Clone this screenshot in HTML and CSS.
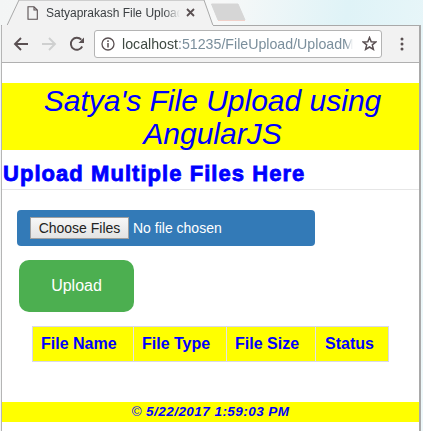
FILE: index.html
```html
<!DOCTYPE html>
<html lang="en">
<head>
<meta charset="utf-8">
<title>Satyaprakash File Upload</title>
<link rel="stylesheet" href="styles.css">
</head>
<body>
<div class="desktop">
  <div class="tabstrip">
    <svg class="tabshape" width="423" height="26" viewBox="0 0 423 26">
      <path d="M1 25.500H7L19 0H204L213 25.500H420" fill="#f2f2f2" stroke="#a9a9a9" stroke-width="1"/>
      <path d="M2 25H213V27H2Z" fill="#f2f2f2"/>
      <path d="M211.500 4H238L245 20H218Z" fill="#d6d6d6" stroke="#d6d6d6" stroke-linejoin="round"/>
      <path d="M218 20.500H245" stroke="#f0cfc8" stroke-width="1"/>
    </svg>
    <svg class="page-icon" width="11" height="14" viewBox="0 0 11 14">
      <path d="M1 .7H7L10.300 4V13.300H1ZM7 .7V4H10.300" fill="none" stroke="#5a5052" stroke-width="1.100"/>
    </svg>
    <span class="tabtitle">Satyaprakash File Upload</span>
    <svg class="close" width="9" height="9" viewBox="0 0 9 9">
      <path d="M1 1L8 8M8 1L1 8" stroke="#5a5052" stroke-width="1.800"/>
    </svg>
  </div>
  <div class="window">
    <div class="toolbar">
      <svg class="nav" width="16" height="16" viewBox="0 0 16 16">
        <path d="M15 8H2M8 2L2 8L8 14" fill="none" stroke="#5a5052" stroke-width="1.900"/>
      </svg>
      <svg class="nav" width="16" height="16" viewBox="0 0 16 16">
        <path d="M1 8H14M8 2L14 8L8 14" fill="none" stroke="#cfd0d0" stroke-width="1.900"/>
      </svg>
      <svg class="nav nav-last" width="16" height="16" viewBox="0 0 16 16">
        <path d="M13.200 10.500A6 6 0 1 1 12.300 3.700" fill="none" stroke="#5a5052" stroke-width="1.900"/>
        <path d="M9.500 7H15V1.500Z" fill="#5a5052"/>
      </svg>
      <div class="omnibox">
        <svg class="info" width="14" height="14" viewBox="0 0 14 14">
          <circle cx="7" cy="7" r="6" fill="none" stroke="#5a5052" stroke-width="1.300"/>
          <path d="M7 6V10.500M7 3.300V5" stroke="#5a5052" stroke-width="1.500"/>
        </svg>
        <div class="url"><span class="host">localhost</span>:51235/FileUpload/UploadMultipleFiles</div>
        <svg class="star" width="15" height="15" viewBox="0 0 15 15">
          <path d="M7.500 1.500L9.200 5.700L13.800 6L10.300 8.900L11.400 13.400L7.500 11L3.600 13.400L4.700 8.900L1.200 6L5.800 5.700Z" fill="none" stroke="#5a5052" stroke-width="1.500"/>
        </svg>
      </div>
      <svg class="menu" width="4" height="14" viewBox="0 0 4 14">
        <circle cx="2" cy="2" r="1.500" fill="#5a5052"/>
        <circle cx="2" cy="7" r="1.500" fill="#5a5052"/>
        <circle cx="2" cy="12" r="1.500" fill="#5a5052"/>
      </svg>
    </div>
    <main class="page">
      <h1 class="banner">Satya's File Upload using AngularJS</h1>
      <h3 class="subhead">Upload Multiple Files Here</h3>
      <div class="filebox">
        <span class="choose">Choose Files</span>
        <span class="nofile">No file chosen</span>
      </div>
      <div class="upload">Upload</div>
      <table class="files">
        <tr>
          <th class="c1">File Name</th>
          <th class="c2">File Type</th>
          <th class="c3">File Size</th>
          <th class="c4">Status</th>
        </tr>
      </table>
      <footer class="foot"><span class="copy">©</span> 5/22/2017 1:59:03 PM</footer>
    </main>
  </div>
</div>
</body>
</html>
```
FILE: styles.css
```css
* { box-sizing: border-box; }
html, body { margin: 0; padding: 0; }
body { width: 423px; height: 431px; overflow: hidden; font-family: "Liberation Sans", Arial, sans-serif; }
.desktop {
  width: 423px; height: 431px; overflow: hidden;
  background: linear-gradient(100deg, #f3f5f5 0%, #f7f8f8 45%, #dff3f7 70%, #eef8fa 100%);
}
.tabstrip { position: relative; height: 25px; display: flex; align-items: center; padding-left: 27px; }
.tabshape { position: absolute; left: 0; top: 0; }
.page-icon { position: relative; margin-right: 8px; flex: none; }
.tabtitle {
  position: relative; width: 134px; white-space: nowrap; overflow: hidden;
  font-size: 12px; color: #3c4043; flex: none; margin-right: 6px;
  -webkit-mask-image: linear-gradient(90deg, #000 88%, transparent);
}
.close { position: relative; flex: none; }
.window { width: 420px; height: 406px; margin-left: 1px; background: #fff; border-right: 2px solid #a9a9a9; border-left: 1px solid #b5b5b5; }
.toolbar { height: 38px; background: #f2f2f2; border-bottom: 1px solid #b0b0b0; display: flex; align-items: center; padding-left: 11px; }
.nav { margin-right: 12px; flex: none; }
.nav-last { margin-right: 9px; }
.omnibox {
  width: 288px; height: 28px; background: #fff; border: 1px solid #b4b4b4; border-radius: 3px;
  display: flex; align-items: center; padding-left: 6px;
}
.info { flex: none; margin-right: 7px; }
.url {
  width: 231px; overflow: hidden; white-space: nowrap; font-size: 14.200px; color: #7b8f9c; flex: none;
  -webkit-mask-image: linear-gradient(90deg, #000 97%, transparent);
}
.host { color: #3f4a42; }
.star { flex: none; margin-left: 9px; }
.menu { margin-left: 18px; flex: none; }
.page { padding-top: 20px; }
.banner {
  margin: 0; height: 67px; background: #ff0; color: #00f; text-align: center;
  font-size: 30px; line-height: 33px; font-style: italic; font-weight: 400;
  padding: 1px 16px 0 20px;
}
.subhead {
  margin: 0; height: 40px; padding: 11px 0 0 1px; border-bottom: 1px solid #e6e6e6;
  color: #00f; font-size: 22px; line-height: 26px; font-weight: 700; letter-spacing: 1.050px; -webkit-text-stroke: .8px #00f;
  white-space: nowrap;
}
.filebox {
  width: 298px; height: 36px; margin: 20px 0 0 15px; background: #337ab7; border-radius: 4px;
  display: flex; align-items: center; padding-left: 13px; color: #fff; font-size: 14px;
}
.choose {
  width: 99px; height: 22px; background: linear-gradient(#f7f7f7, #e3e3e3); border: 1px solid #a0a0a0;
  color: #222; text-align: center; line-height: 20px; margin-right: 4px;
}
.upload {
  width: 115px; height: 52px; margin: 14px 0 0 17px; background: #4caf50; border-radius: 10px;
  color: #fff; font-size: 16px; line-height: 52px; text-align: center;
}
.files { margin: 14px 0 0 30px; width: 357px; height: 36px; border-collapse: separate; border-spacing: 0; background: #ff0; border: 1px solid #d8d8e8; }
.files th { border-left: 1px solid #e2e2ea; color: #00f; font-size: 16px; font-weight: 700; text-align: left; padding: 0; white-space: nowrap; }
.files th.c1 { border-left: 0; width: 100px; padding-left: 8px; }
.files th.c2 { width: 93px; padding-left: 8px; }
.files th.c3 { width: 89px; padding-left: 8px; }
.files th.c4 { padding-left: 9px; }
.foot {
  margin-top: 40px; height: 20px; background: #ff0; color: #00f; text-align: center;
  font-size: 13.500px; line-height: 20px; font-style: italic; font-weight: 700; letter-spacing: .45px;
}
.copy { font-weight: 400; }
```
